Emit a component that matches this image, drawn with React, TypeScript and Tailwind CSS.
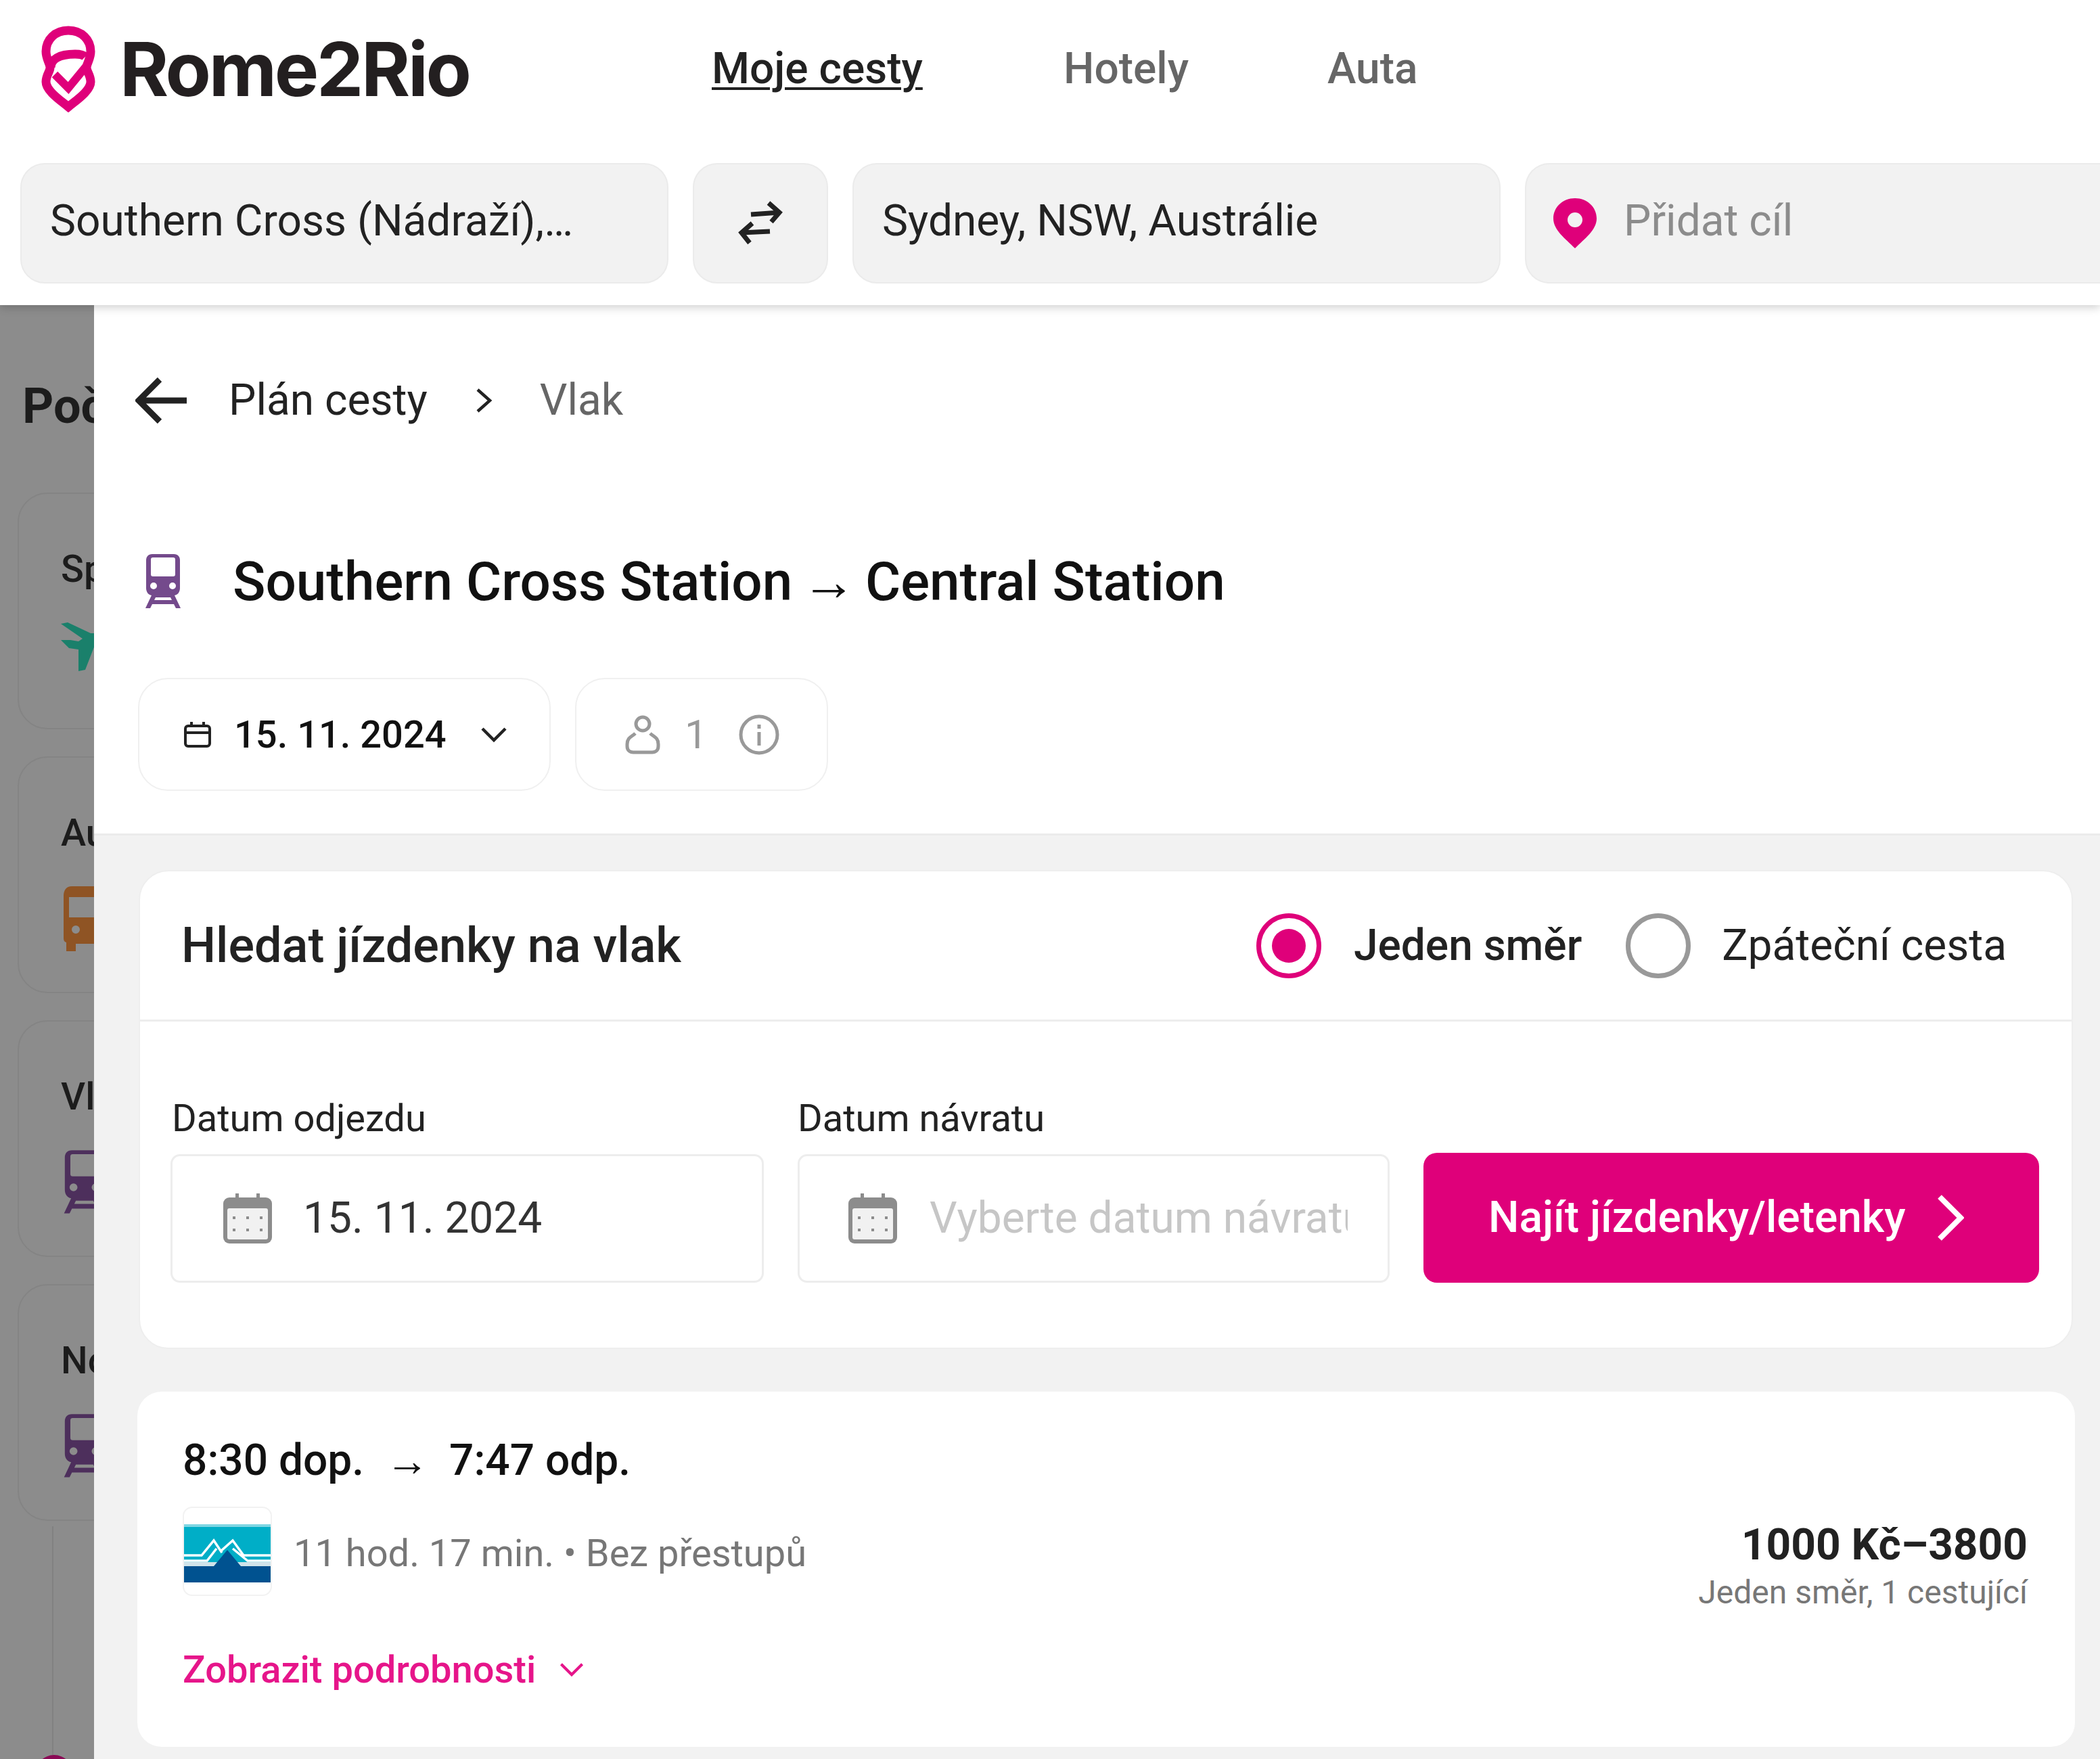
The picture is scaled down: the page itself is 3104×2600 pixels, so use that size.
import React from "react";

const Logo = () => (
  <svg width="84" height="128" viewBox="0 0 84 128" className="shrink-0" fill="none" stroke="#df007a" strokeWidth="13">
    <path d="M42 7C22 7 9 21 9 38C9 49 15 56 15 62C15 68 9 73 9 83C9 96 30 110 42 120C54 110 75 96 75 83C75 73 69 68 69 62C69 56 75 49 75 38C75 21 62 7 42 7Z" />
    <path d="M16 62C16 50 28 42 52 42C60 42 65 44 67 46" />
    <path d="M22 72L42 92L70 58" strokeWidth="12" />
  </svg>
);

const Swap = () => (
  <svg width="68" height="66" viewBox="0 0 68 66" fill="none" stroke="#222" strokeWidth="7">
    <path d="M20 20L62 17M46 3L62 17L50 31" />
    <path d="M48 45L6 47M22 33L6 47L18 62" />
  </svg>
);

const Cal = ({ className = "" }: { className?: string }) => (
  <svg viewBox="0 0 72 74" className={className}>
    <rect x="0" y="6" width="72" height="68" rx="9" fill="#8c8c8c" />
    <rect x="18" y="0" width="5" height="12" fill="#8c8c8c" />
    <rect x="49" y="0" width="5" height="12" fill="#8c8c8c" />
    <rect x="6" y="22" width="60" height="46" rx="3" fill="#f1f1f1" />
    {[16, 36, 56].map((x) =>
      [36, 54].map((y) => <rect key={x + "-" + y} x={x - 2} y={y - 2} width="4" height="4" fill="#8c8c8c" />)
    )}
  </svg>
);

const Train = ({ color, className = "" }: { color: string; className?: string }) => (
  <svg viewBox="0 0 60 82" className={className}>
    <path fill={color} fillRule="evenodd" d="M14 0H46C52 0 55 4 55 9V50C55 56 52 60 47 61L56 80H49L46 74H14L11 80H4L13 61C8 60 5 56 5 50V9C5 4 8 0 14 0ZM12 8V30C12 32 13 33 15 33H45C47 33 48 32 48 30V8C48 6 47 5 45 5H15C13 5 12 6 12 8ZM16 42A5 5 0 1 0 16 52A5 5 0 1 0 16 42ZM44 42A5 5 0 1 0 44 52A5 5 0 1 0 44 42ZM19 64L17 68H43L41 64Z" />
  </svg>
);

const Bus = () => (
  <svg viewBox="0 0 84 96" width="84" height="96" className="shrink-0">
    <path fill="#8f5424" fillRule="evenodd" d="M16 0H68C76 0 80 6 80 14V76C80 80 78 82 76 83V96H62V85H22V96H8V83C5 82 4 80 4 76V14C4 6 8 0 16 0ZM12 16V46H72V16ZM22 58A6 6 0 1 0 22 70A6 6 0 1 0 22 58Z" />
  </svg>
);

const Plane = () => (
  <svg viewBox="0 0 100 72" width="100" height="72" className="shrink-0 mt-[16px]">
    <path fill="#1a806b" d="M0 2L10 0L44 16L76 16L80 24L50 34L36 70L26 72L26 40L12 38L0 26L14 26L26 28L32 24Z" />
  </svg>
);

const SideCard = ({ label, children }: { label: string; children: React.ReactNode }) => (
  <div className="h-[350px] w-[400px] rounded-[44px] border-2 border-[#848484] bg-[#8c8c8c] pl-[62px] pt-[78px]">
    <div className="text-[56px] leading-[66px] font-medium text-[#1c1c1c] whitespace-nowrap">{label}</div>
    <div className="mt-[46px]">{children}</div>
  </div>
);

const Chevron = ({ className = "", color = "#222", w = 5 }: { className?: string; color?: string; w?: number }) => (
  <svg viewBox="0 0 40 24" className={className} fill="none" stroke={color} strokeWidth={w}>
    <path d="M3 3L20 20L37 3" />
  </svg>
);

export default function App() {
  return (
    <div className="w-[3104px] h-[2600px] overflow-hidden bg-white flex flex-col font-['Roboto',sans-serif] text-[#222]">
      <header className="relative z-10 h-[451px] shrink-0 bg-white shadow-[0_4px_12px_rgba(0,0,0,0.18)]">
        <div className="h-[241px] flex items-start">
          <div className="flex items-center w-[1052px] pl-[59px] pt-[38px]">
            <Logo />
            <span className="ml-[34px] font-['Inter',sans-serif] font-bold text-[110px] leading-[128px] tracking-[-0.03em] text-[#231f20]">Rome2Rio</span>
          </div>
          <nav className="flex items-center h-[204px] text-[64px] font-medium text-[#666]">
            <a className="underline text-[#222] underline-offset-[6px] decoration-[4px] w-[520px]">Moje cesty</a>
            <a className="w-[390px]">Hotely</a>
            <a>Auta</a>
          </nav>
        </div>
        <div className="flex pl-[30px] gap-[36px] text-[64px] leading-[70px]">
          <div className="w-[958px] h-[178px] shrink-0 rounded-[36px] bg-[#f2f2f2] border-2 border-[#ebebeb] flex items-center pl-[42px] pb-[6px] whitespace-nowrap">Southern Cross (Nádraží),…</div>
          <div className="w-[200px] h-[178px] shrink-0 rounded-[36px] bg-[#f2f2f2] border-2 border-[#ebebeb] flex items-center justify-center"><Swap /></div>
          <div className="w-[958px] h-[178px] shrink-0 rounded-[36px] bg-[#f2f2f2] border-2 border-[#ebebeb] flex items-center pl-[42px] pb-[6px] whitespace-nowrap">Sydney, NSW, Austrálie</div>
          <div className="w-[900px] h-[178px] shrink-0 rounded-l-[36px] bg-[#f2f2f2] border-2 border-r-0 border-[#ebebeb] flex items-center pl-[40px] pb-[6px] text-[#8c8c8c]">
            <svg viewBox="0 0 64 74" width="64" height="74" className="shrink-0 mt-[6px]">
              <path fill="#df007a" fillRule="evenodd" d="M32 0C50 0 64 13 64 30C64 47 46 60 32 74C18 60 0 47 0 30C0 13 14 0 32 0ZM32 21A11 11 0 1 0 32 43A11 11 0 1 0 32 21Z" />
            </svg>
            <span className="ml-[40px]">Přidat cíl</span>
          </div>
        </div>
      </header>

      <div className="flex flex-1 min-h-0">
        <aside className="relative w-[139px] shrink-0 overflow-hidden bg-[#8c8c8c] pl-[26px]">
          <div className="pt-[108px] pl-[7px] h-[277px] text-[72px] leading-[84px] font-bold text-[#1c1c1c] whitespace-nowrap">Počet možností</div>
          <div className="flex flex-col gap-[40px]">
            <SideCard label="Spojení"><Plane /></SideCard>
            <SideCard label="Autobus"><Bus /></SideCard>
            <SideCard label="Vlak"><Train color="#4d2f5c" className="w-[70px] h-[96px]" /></SideCard>
            <SideCard label="Noční vlak"><Train color="#4d2f5c" className="w-[70px] h-[96px]" /></SideCard>
          </div>
          <div className="ml-[51px] mt-[8px] h-[340px] w-[2px] bg-[#818181]" />
          <div className="absolute left-[52px] top-[2143px] h-[56px] w-[56px] rounded-full bg-[#8a0a55]" />
        </aside>

        <main className="flex-1 min-w-0 flex flex-col bg-[#f2f2f2]">
          <section className="h-[784px] shrink-0 bg-white border-b-[3px] border-[#ebebeb] pl-[65px] pt-[102px]">
            <div className="flex items-center h-[78px] text-[64px] -ml-[4px]">
              <svg viewBox="0 0 76 68" width="76" height="68" fill="none" stroke="#222" strokeWidth="9"><path d="M76 34H6M36 3L5 34L36 65" /></svg>
              <span className="ml-[62px]">Plán cesty</span>
              <svg viewBox="0 0 30 40" width="30" height="40" className="ml-[68px]" fill="none" stroke="#222" strokeWidth="4.5"><path d="M6 4L24 20L6 36" /></svg>
              <span className="ml-[68px] text-[#666]">Vlak</span>
            </div>
            <div className="flex items-center mt-[189px] h-[80px] -ml-[4px]">
              <Train color="#744a8c" className="w-[60px] h-[82px] ml-[11px]" />
              <h1 className="ml-[73px] text-[80px] font-medium leading-[80px] text-[#111] whitespace-nowrap">Southern Cross Station <span className="-mx-[6px] font-['Liberation_Sans',sans-serif] font-bold">→</span> Central Station</h1>
            </div>
            <div className="flex mt-[102px] gap-[36px]">
              <div className="w-[610px] h-[167px] rounded-[44px] border-2 border-[#f0f0f0] flex items-center pl-[66px]">
                <svg viewBox="0 0 40 38" width="40" height="38" fill="none" stroke="#222" strokeWidth="4"><rect x="2" y="6" width="36" height="30" rx="4" /><path d="M2 16H38M11 0V8M29 0V8" /></svg>
                <span className="ml-[34px] text-[56px] font-medium text-[#111]">15. 11. 2024</span>
                <Chevron className="ml-[50px] w-[40px] h-[24px]" w={4.5} />
              </div>
              <div className="w-[374px] h-[167px] rounded-[44px] border-2 border-[#f0f0f0] flex items-center pl-[72px] text-[60px] text-[#999]">
                <svg viewBox="0 0 52 58" width="52" height="58" fill="none" stroke="#999" strokeWidth="5"><circle cx="26" cy="13" r="10" /><path d="M15 27C10 32 3 33 3 43V46C3 52 7 55 12 55H40C45 55 49 52 49 46V43C49 33 42 32 37 27" /></svg>
                <span className="ml-[36px]">1</span>
                <svg viewBox="0 0 60 60" width="60" height="60" className="ml-[46px]" fill="none" stroke="#999" strokeWidth="5"><circle cx="30" cy="30" r="27" /><path d="M30 26V46M30 15V21" /></svg>
              </div>
            </div>
          </section>

          <section className="flex-1 min-h-0 pt-[51px]">
            <div className="ml-[66px] w-[2859px] h-[708px] rounded-[44px] bg-white border-2 border-[#eeeeee]">
              <div className="h-[222px] border-b-[3px] border-[#ededed] flex items-center pl-[61px] pr-[96px]">
                <h2 className="flex-1 text-[72px] font-medium text-[#222]">Hledat jízdenky na vlak</h2>
                <div className="flex items-center text-[64px]">
                  <span className="w-[96px] h-[96px] rounded-full border-[7px] border-[#df007a] flex items-center justify-center"><span className="w-[50px] h-[50px] rounded-full bg-[#df007a]" /></span>
                  <span className="ml-[48px] font-medium">Jeden směr</span>
                  <span className="ml-[65px] w-[96px] h-[96px] rounded-full border-[7px] border-[#999]" />
                  <span className="ml-[46px]">Zpáteční cesta</span>
                </div>
              </div>
              <div className="grid grid-cols-[877px_875px_910px] gap-x-[50px] items-end pl-[45px] pt-[111px]">
                <div>
                  <div className="text-[56px] leading-[60px] h-[85px] pl-[2px] pt-[2px]">Datum odjezdu</div>
                  <div className="h-[190px] rounded-[14px] border-[3px] border-[#ededed] flex items-center pl-[75px]">
                    <Cal className="w-[72px] h-[74px]" />
                    <span className="ml-[46px] text-[64px] text-[#333]">15. 11. 2024</span>
                  </div>
                </div>
                <div>
                  <div className="text-[56px] leading-[60px] h-[85px] pt-[2px]">Datum návratu</div>
                  <div className="h-[190px] rounded-[14px] border-[3px] border-[#ededed] flex items-center pl-[72px]">
                    <Cal className="w-[72px] h-[74px] shrink-0" />
                    <span className="ml-[48px] w-[618px] overflow-hidden whitespace-nowrap text-[64px] text-[#c6c6c6]">Vyberte datum návratu</span>
                  </div>
                </div>
                <button className="h-[192px] rounded-[20px] bg-[#df007a] text-white flex items-center pl-[96px] text-[64px] font-medium">
                  Najít jízdenky/letenky
                  <svg viewBox="0 0 40 68" width="40" height="68" className="ml-[46px]" fill="none" stroke="#fff" strokeWidth="8"><path d="M4 3L35 34L4 65" /></svg>
                </button>
              </div>
            </div>

            <div className="ml-[64px] mt-[63px] w-[2864px] h-[525px] rounded-[36px] bg-white pl-[67px] pr-[70px] pt-[66px]">
              <div className="flex text-[64px] leading-[72px] font-medium text-[#111] whitespace-pre">
                <span>8:30 dop.</span>
                <span className="ml-[32px] font-['Liberation_Sans',sans-serif] font-bold">→</span>
                <span className="ml-[30px]">7:47 odp.</span>
              </div>
              <div className="flex justify-between mt-[33px] h-[130px]">
                <div className="flex items-center">
                  <div className="w-[132px] h-[132px] rounded-[14px] border-2 border-[#f2f2f2] flex items-center pt-[6px]">
                    <svg viewBox="0 0 128 86" className="w-full h-[86px]">
                      <rect width="128" height="86" fill="#00aec7" />
                      <rect y="0" width="128" height="4" fill="#7fd6e3" />
                      <rect y="56" width="128" height="8" fill="#cfe3ea" />
                      <rect y="62" width="128" height="24" fill="#005290" />
                      <path d="M0 46H26L44 24L56 42M54 40L72 24L88 46H128M0 54H34L48 36M72 36L94 54H128" fill="none" stroke="#fff" strokeWidth="3.5" />
                      <path d="M44 62L64 38L84 62Z" fill="#005290" />
                    </svg>
                  </div>
                  <span className="ml-[32px] pt-[6px] text-[56px] text-[#777] whitespace-nowrap">11 hod. 17 min. • Bez přestupů</span>
                </div>
                <div className="text-right pt-[20px]">
                  <div className="text-[64px] leading-[72px] font-bold text-[#222]">1000 Kč–3800</div>
                  <div className="text-[48px] leading-[60px] text-[#777] mt-[4px]">Jeden směr, 1 cestující</div>
                </div>
              </div>
              <div className="flex items-center mt-[68px] text-[56px] font-medium text-[#e6158a]">
                Zobrazit podrobnosti
                <Chevron className="ml-[34px] w-[38px] h-[22px]" color="#e6158a" w={4.5} />
              </div>
            </div>
          </section>
        </main>
      </div>
    </div>
  );
}
